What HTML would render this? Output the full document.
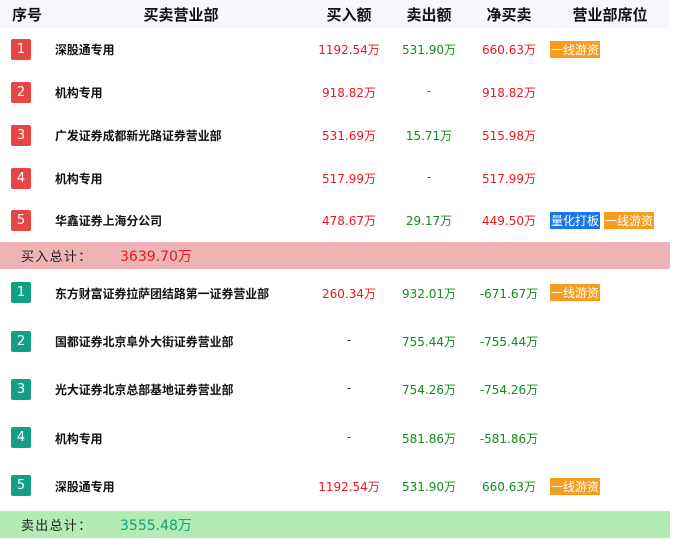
<!DOCTYPE html><html><head><meta charset="utf-8"><style>
*{margin:0;padding:0;box-sizing:border-box}
body{width:676px;height:540px;background:#fff;font-family:"DejaVu Sans","Noto Sans CJK SC",sans-serif;position:relative;overflow:hidden}
.a{position:absolute;white-space:nowrap}
.hd{position:absolute;left:0;top:0;width:670px;height:28px;background:#f5f7fc}
.h{font-size:15px;font-weight:bold;color:#111;top:4px;transform:translateX(-50%);font-family:"Noto Sans CJK SC",sans-serif}
.b{width:20px;height:21px;color:#fff;font-size:13px;text-align:center;line-height:21px;border-radius:2px;left:11px}
.r{background:#e84545}.g{background:#12a085}
.n{left:55px;font-size:11.9px;font-weight:bold;color:#111;font-family:"Noto Sans CJK SC",sans-serif}
.v{font-size:12px;transform:translateX(-50%)}
.red{color:#f0141e}.grn{color:#138a1e}
.t{font-size:12px;color:#fff;height:17px;line-height:17px;padding:0 1px;font-family:"Noto Sans CJK SC",sans-serif}
.o{background:#f89c1d}.bl{background:#1a77e6}
.tl{left:21px;font-size:13px;color:#222;letter-spacing:1.3px;font-family:'Noto Sans CJK SC',sans-serif}
</style></head><body>
<div class="hd"></div>
<div class="a h" style="left:27px">序号</div>
<div class="a h" style="left:181px">买卖营业部</div>
<div class="a h" style="left:349px">买入额</div>
<div class="a h" style="left:429px">卖出额</div>
<div class="a h" style="left:509px">净买卖</div>
<div class="a h" style="left:610px">营业部席位</div>

<div class="a b r" style="top:39px">1</div><div class="a n" style="top:41px">深股通专用</div>
<div class="a v red" style="left:349px;top:41px">1192.54万</div><div class="a v grn" style="left:429px;top:41px">531.90万</div><div class="a v red" style="left:509px;top:41px">660.63万</div>
<div class="a t o" style="left:550px;top:41px">一线游资</div>

<div class="a b r" style="top:82px">2</div><div class="a n" style="top:84px">机构专用</div>
<div class="a v red" style="left:349px;top:84px">918.82万</div><div class="a v grn" style="left:429px;top:84px">-</div><div class="a v red" style="left:509px;top:84px">918.82万</div>

<div class="a b r" style="top:125px">3</div><div class="a n" style="top:127px">广发证券成都新光路证券营业部</div>
<div class="a v red" style="left:349px;top:127px">531.69万</div><div class="a v grn" style="left:429px;top:127px">15.71万</div><div class="a v red" style="left:509px;top:127px">515.98万</div>

<div class="a b r" style="top:168px">4</div><div class="a n" style="top:170px">机构专用</div>
<div class="a v red" style="left:349px;top:170px">517.99万</div><div class="a v grn" style="left:429px;top:170px">-</div><div class="a v red" style="left:509px;top:170px">517.99万</div>

<div class="a b r" style="top:210px">5</div><div class="a n" style="top:212px">华鑫证券上海分公司</div>
<div class="a v red" style="left:349px;top:212px">478.67万</div><div class="a v grn" style="left:429px;top:212px">29.17万</div><div class="a v red" style="left:509px;top:212px">449.50万</div>
<div class="a t bl" style="left:550px;top:212px">量化打板</div><div class="a t o" style="left:604px;top:212px">一线游资</div>

<div class="a" style="left:0;top:242px;width:670px;height:27px;background:#eeb4b4"></div>
<div class="a tl" style="top:246px">买入总计：</div>
<div class="a" style="left:120px;top:246px;font-size:14px;color:#f0141e">3639.70万</div>

<div class="a b g" style="top:282px">1</div><div class="a n" style="top:285px">东方财富证券拉萨团结路第一证券营业部</div>
<div class="a v red" style="left:349px;top:285px">260.34万</div><div class="a v grn" style="left:429px;top:285px">932.01万</div><div class="a v grn" style="left:509px;top:285px">-671.67万</div>
<div class="a t o" style="left:550px;top:284px">一线游资</div>

<div class="a b g" style="top:331px">2</div><div class="a n" style="top:333px">国都证券北京阜外大街证券营业部</div>
<div class="a v" style="left:349px;top:333px;color:#333">-</div><div class="a v grn" style="left:429px;top:333px">755.44万</div><div class="a v grn" style="left:509px;top:333px">-755.44万</div>

<div class="a b g" style="top:379px">3</div><div class="a n" style="top:381px">光大证券北京总部基地证券营业部</div>
<div class="a v" style="left:349px;top:381px;color:#333">-</div><div class="a v grn" style="left:429px;top:381px">754.26万</div><div class="a v grn" style="left:509px;top:381px">-754.26万</div>

<div class="a b g" style="top:427px">4</div><div class="a n" style="top:430px">机构专用</div>
<div class="a v red" style="left:349px;top:430px">-</div><div class="a v grn" style="left:429px;top:430px">581.86万</div><div class="a v grn" style="left:509px;top:430px">-581.86万</div>

<div class="a b g" style="top:475px">5</div><div class="a n" style="top:478px">深股通专用</div>
<div class="a v red" style="left:349px;top:478px">1192.54万</div><div class="a v grn" style="left:429px;top:478px">531.90万</div><div class="a v grn" style="left:509px;top:478px">660.63万</div>
<div class="a t o" style="left:550px;top:478px">一线游资</div>

<div class="a" style="left:0;top:511px;width:670px;height:27px;background:#b3ecb3"></div>
<div class="a tl" style="top:515px">卖出总计：</div>
<div class="a" style="left:120px;top:515px;font-size:14px;color:#12a085">3555.48万</div>
</body></html>
